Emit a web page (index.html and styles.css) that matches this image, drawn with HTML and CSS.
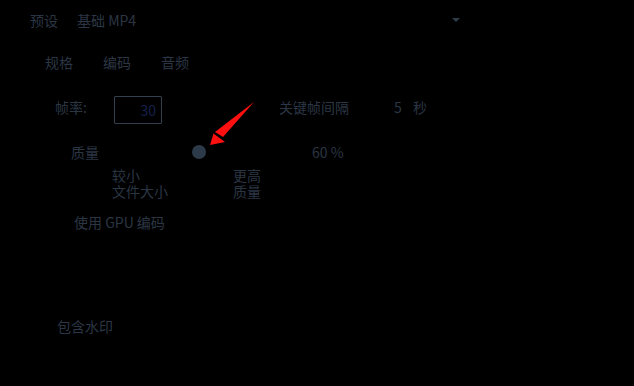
FILE: index.html
```html
<!DOCTYPE html>
<html lang="zh">
<head>
  <meta charset="UTF-8" />
  <title>导出设置</title>
  <link rel="stylesheet" href="styles.css">
</head>
<body>
  <div class="panel">
    <div class="preset-row">
      <span class="preset-label">预设</span>
      <div class="preset-select">
        <span>基础 MP4</span>
        <span class="caret"></span>
      </div>
    </div>

    <div class="tabs">
      <span>规格</span>
      <span>编码</span>
      <span>音频</span>
    </div>

    <div class="fps-row">
      <span class="fps-label">帧率:</span>
      <div class="fps-input">30</div>
      <span class="key-label">关键帧间隔</span>
      <span class="key-value">5</span>
      <span class="key-unit">秒</span>
    </div>

    <div class="quality-row">
      <span class="quality-label">质量</span>
      <div class="slider"><span class="thumb"></span></div>
      <span class="quality-value">60 %</span>
    </div>

    <div class="slider-hints">
      <span class="hint-left">较小<br>文件大小</span>
      <span class="hint-right">更高<br>质量</span>
    </div>

    <div class="gpu-row">使用 GPU 编码</div>

    <div class="watermark-row">包含水印</div>

    <svg class="annotation" width="60" height="50" viewBox="0 0 60 50">
      <path d="M10 48 L13.5 36.5 L25 45 Z" fill="#ff1010"/>
      <path d="M54 5 L23 40 L15 35 Z" fill="#ff1010"/>
    </svg>
  </div>
</body>
</html>
```

FILE: styles.css
```css
body {
  margin: 0;
  background: #000;
  color: #2b3644;
  font-family: "Noto Sans CJK SC", "DejaVu Sans", sans-serif;
  font-size: 14px;
}
.panel {
  position: relative;
  width: 634px;
  height: 386px;
}
.preset-row {
  display: flex;
  align-items: center;
  height: 40px;
  padding-left: 30px;
}
.preset-label {
  width: 47px;
}
.preset-select {
  display: flex;
  align-items: center;
  justify-content: space-between;
  width: 383px;
}
.caret {
  width: 0;
  height: 0;
  border-left: 4px solid transparent;
  border-right: 4px solid transparent;
  border-top: 4px solid #2f3d4b;
}
.tabs {
  display: flex;
  gap: 30px;
  height: 44px;
  align-items: center;
  padding-left: 45px;
}
.fps-row {
  display: flex;
  align-items: center;
  height: 46px;
  margin-top: 3px;
  padding-left: 55px;
}
.fps-label,
.key-label,
.key-value,
.key-unit {
  padding-bottom: 6px;
}
.fps-label {
  width: 59px;
}
.fps-input {
  box-sizing: border-box;
  width: 48px;
  height: 28px;
  border: 1px solid #34404d;
  border-radius: 1px;
  text-align: right;
  padding-right: 5px;
  line-height: 26px;
  color: #14204a;
}
.key-label {
  margin-left: 117px;
  width: 115px;
}
.key-value {
  width: 19px;
}
.quality-row {
  display: flex;
  align-items: center;
  height: 37px;
  padding-left: 71px;
}
.quality-label {
  width: 121px;
}
.slider {
  width: 120px;
}
.thumb {
  display: block;
  width: 14px;
  height: 14px;
  border-radius: 50%;
  background: #2d3a49;
}
.slider-hints {
  display: flex;
  padding-left: 112px;
  line-height: 16px;
  margin-top: -3px;
}
.hint-left {
  width: 121px;
}
.gpu-row {
  padding-left: 74px;
  margin-top: 13px;
  line-height: 20px;
}
.watermark-row {
  padding-left: 57px;
  margin-top: 84px;
  line-height: 20px;
}
.annotation {
  position: absolute;
  left: 200px;
  top: 97px;
}
```
